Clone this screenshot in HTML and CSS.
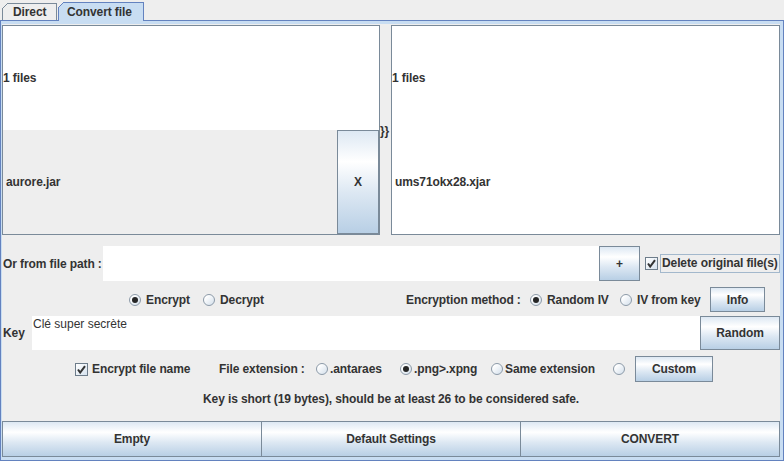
FILE: index.html
```html
<!DOCTYPE html>
<html lang="fr">

<head>
  <meta charset="UTF-8">
  <meta name="viewport" content="width=device-width, initial-scale=1.0">
  <title>Convert file</title>
  <link rel="stylesheet" href="styles.css">
</head>

<body>
  <div class="window">
    <div class="tabs">
      <div class="tab tab-direct">Direct</div>
      <div class="tab tab-convert selected">Convert file</div>
    </div>

    <div class="tabpanel">
      <!-- source / target lists -->
      <div class="files">
        <div class="filebox source">
          <div class="half">1 files</div>
          <div class="half grey">
            <span class="name">aurore.jar</span>
            <button class="btn remove">X</button>
          </div>
        </div>
        <div class="arrow">}}</div>
        <div class="filebox target">
          <div class="half">1 files</div>
          <div class="half"><span class="name">ums71okx28.xjar</span></div>
        </div>
      </div>

      <div class="row path-row">
        <label class="path-label">Or from file path :</label>
        <div class="field path-field"></div>
        <button class="btn plus">+</button>
        <span class="check on"><svg width="11" height="11" viewBox="0 0 11 11"><path d="M2 5.5 L4.2 8.6 L9 2.2" fill="none" stroke="#333" stroke-width="2"/></svg></span>
        <span class="focus">Delete original file(s)</span>
      </div>

      <div class="row method-row">
        <span class="opt w-encrypt"><span class="radio on"></span>Encrypt</span>
        <span class="opt w-decrypt"><span class="radio"></span>Decrypt</span>
        <span class="w-method">Encryption method :</span>
        <span class="opt w-iv"><span class="radio on"></span>Random IV</span>
        <span class="opt w-iv"><span class="radio"></span>IV from key</span>
        <button class="btn info">Info</button>
      </div>

      <div class="row key-row">
        <label class="key-label">Key</label>
        <div class="field key-field">Clé super secrète</div>
        <button class="btn random">Random</button>
      </div>

      <div class="row ext-row">
        <span class="opt w-name"><span class="check on"><svg width="11" height="11" viewBox="0 0 11 11"><path d="M2 5.5 L4.2 8.6 L9 2.2" fill="none" stroke="#333" stroke-width="2"/></svg></span>Encrypt file name</span>
        <span class="w-ext">File extension :</span>
        <span class="opt w-antaraes"><span class="radio"></span>.antaraes</span>
        <span class="opt w-png"><span class="radio on"></span>.png&gt;.xpng</span>
        <span class="opt w-same"><span class="radio"></span>Same extension</span>
        <span class="opt w-custom"><span class="radio"></span></span>
        <button class="btn custom">Custom</button>
      </div>

      <div class="message">Key is short (19 bytes), should be at least 26 to be considered safe.</div>

      <div class="actions">
        <button class="btn">Empty</button>
        <button class="btn">Default Settings</button>
        <button class="btn">CONVERT</button>
      </div>
    </div>
  </div>
</body>

</html>
```

FILE: styles.css
```css
body {
  margin: 0;
  background-color: #eeeeee;
  color: #333333;
  font: bold 12px "Liberation Sans", Arial, sans-serif;
  letter-spacing: -0.1px;
  white-space: nowrap;
}

.window {
  width: 784px;
  height: 461px;
  overflow: hidden;
}

/* tabs */
.tabs {
  display: flex;
  align-items: flex-end;
  height: 20px;
  padding-left: 2px;
  box-sizing: border-box;
}

.tab {
  position: relative;
  box-sizing: border-box;
  height: 17px;
  border: 1px solid #7a8a99;
  border-bottom: 0;
  padding-left: 10px;
  line-height: 16px;
  background-color: #eeeeee;
}

.tab::before {
  content: "";
  position: absolute;
  left: -1px;
  top: -1px;
  width: 6px;
  height: 6px;
  background: linear-gradient(135deg, #eeeeee 0 42%, #7a8a99 42% 58%, transparent 58%);
}

.tab-direct {
  width: 55px;
}

.tab-convert {
  width: 86px;
  margin-left: 1px;
}

.tab.selected {
  z-index: 1;
  height: 19px;
  margin-bottom: -1px;
  padding-left: 8px;
  line-height: 18px;
  border-color: #6382bf;
  background-color: #c8ddf2;
}

.tab.selected::before {
  background: linear-gradient(135deg, #eeeeee 0 42%, #6382bf 42% 58%, transparent 58%);
}

.tabpanel {
  display: flex;
  flex-direction: column;
  height: 441px;
  box-sizing: border-box;
  border: 1px solid #6382bf;
  padding: 4px 3px 3px 1px;
  box-shadow: inset 1px 3px 0 #c8ddf2, inset -3px -3px 0 #c8ddf2;
}

/* buttons */
.btn {
  flex-shrink: 0;
  box-sizing: border-box;
  margin: 0;
  padding: 0;
  border: 1px solid #7a8a99;
  border-radius: 0;
  background: linear-gradient(#dde8f3 0%, #ffffff 30%, #dde8f3 60%, #b8cfe5 100%);
  color: #333333;
  font: bold 12px "Liberation Sans", Arial, sans-serif;
  letter-spacing: -0.1px;
}

/* file lists */
.files {
  display: flex;
  align-items: center;
  height: 210px;
}

.filebox {
  display: flex;
  flex-direction: column;
  height: 210px;
  box-sizing: border-box;
  border: 1px solid #7a8a99;
}

.source {
  width: 378px;
}

.target {
  flex: 1;
}

.half {
  flex: 1;
  display: flex;
  align-items: center;
  background-color: #ffffff;
}

.half.grey {
  background-color: #eeeeee;
}

.name {
  flex: 1;
  padding-left: 3px;
}

.remove {
  width: 42px;
  align-self: stretch;
}

.arrow {
  width: 11px;
  flex-shrink: 0;
  padding-top: 1px;
}

/* rows */
.row {
  display: flex;
  align-items: center;
}

.row > * {
  flex-shrink: 0;
}

.field {
  background-color: #ffffff;
}

.path-row {
  height: 35px;
  margin-top: 11px;
}

.path-label {
  width: 101px;
  padding-left: 1px;
  box-sizing: border-box;
}

.path-field {
  width: 496px;
  align-self: stretch;
}

.plus {
  width: 41px;
  align-self: stretch;
}

.check {
  display: flex;
  align-items: center;
  justify-content: center;
  flex-shrink: 0;
  width: 13px;
  height: 13px;
  box-sizing: border-box;
  border: 1px solid #6d7c8a;
  background: linear-gradient(135deg, #ffffff, #d6e2ee);
}

.path-row .check {
  margin-left: 5px;
}

.focus {
  margin-left: 2px;
  padding: 1px 1px 2px;
  border: 1px solid #a3b8cc;
}

.opt {
  display: flex;
  align-items: center;
}

.radio {
  position: relative;
  flex-shrink: 0;
  width: 12px;
  height: 12px;
  box-sizing: border-box;
  margin-right: 5px;
  border: 1px solid #8c9aa8;
  border-radius: 50%;
  background: linear-gradient(135deg, #ffffff 20%, #d3dfeb);
}

.radio.on::after {
  content: "";
  position: absolute;
  left: 2px;
  top: 2px;
  width: 6px;
  height: 6px;
  border-radius: 50%;
  background-color: #262626;
}

.method-row {
  height: 25px;
  margin-top: 6px;
  padding-left: 127px;
}

.w-encrypt {
  width: 74px;
}

.w-decrypt {
  width: 203px;
}

.w-method {
  width: 124px;
}

.w-iv {
  width: 90px;
}

.info {
  width: 55px;
  align-self: stretch;
}

.key-row {
  height: 34px;
  margin-top: 4px;
  align-items: stretch;
}

.key-label {
  display: flex;
  align-items: center;
  width: 30px;
  padding-left: 1px;
  box-sizing: border-box;
}

.key-row .key-field {
  flex: 1;
  flex-shrink: 1;
  padding: 1px 1px;
  font-weight: normal;
  letter-spacing: 0;
  line-height: 15px;
}

.random {
  width: 80px;
}

.ext-row {
  height: 26px;
  margin-top: 6px;
  padding-left: 73px;
}

.ext-row .radio {
  margin-right: 2px;
}

.ext-row .check {
  margin-right: 4px;
}

.w-name {
  width: 144px;
}

.w-ext {
  width: 97px;
}

.w-antaraes {
  width: 84px;
}

.w-png {
  width: 91px;
}

.w-same {
  width: 122px;
}

.w-custom {
  width: 22px;
}

.custom {
  width: 78px;
  align-self: stretch;
}

.message {
  display: flex;
  align-items: center;
  justify-content: center;
  height: 34px;
  margin-bottom: 5px;
}

.actions {
  display: flex;
  height: 36px;
}

.actions .btn {
  flex: 1;
}

.actions .btn + .btn {
  margin-left: -1px;
}
```
